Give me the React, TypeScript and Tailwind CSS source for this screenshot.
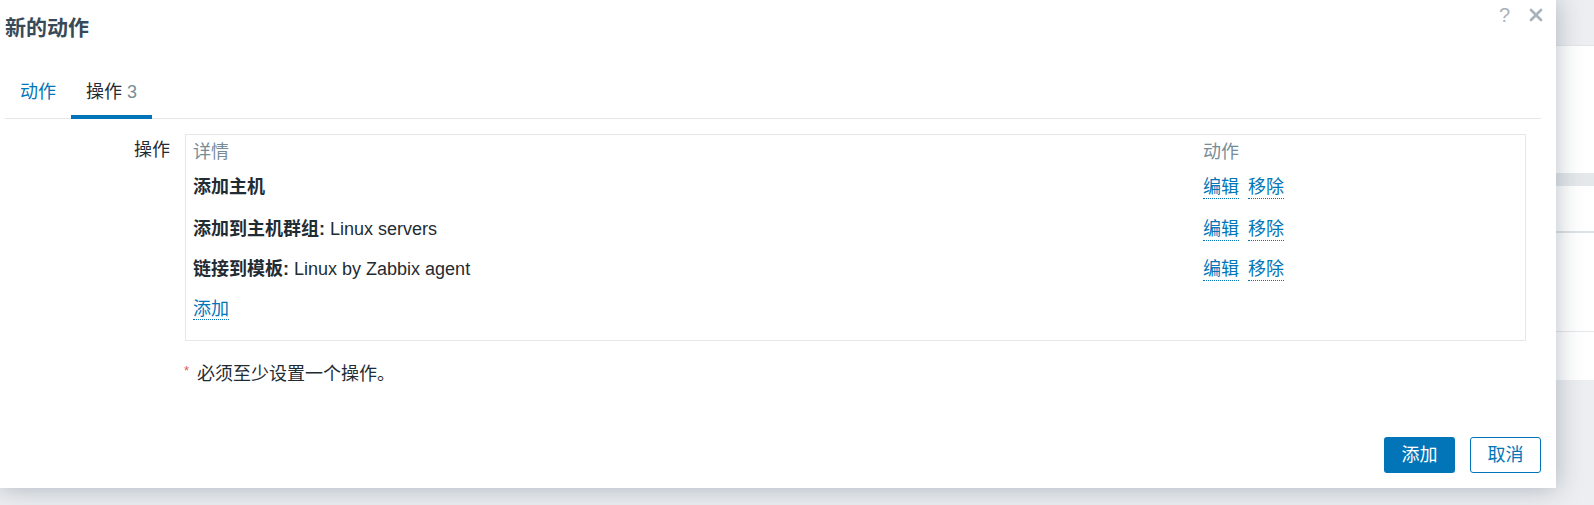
import { X } from 'lucide-react';

const font = { fontFamily: '"Liberation Sans", "Noto Sans CJK SC", sans-serif' };

const ops = [
  { label: '添加主机', value: '' },
  { label: '添加到主机群组:', value: 'Linux servers' },
  { label: '链接到模板:', value: 'Linux by Zabbix agent' },
];

const LinkText: React.FC<{ children: React.ReactNode }> = ({ children }) => (
  <span className="text-[#0275b8] border-b border-dotted border-[#0275b8] cursor-pointer">{children}</span>
);

export default function App() {
  return (
    <div className="relative w-[1594px] h-[505px] overflow-hidden bg-[#e9ecee] text-[18px] leading-[22px] text-[#1f2c33]" style={font}>
      {/* page behind the dialog */}
      <div className="flex flex-col h-full">
        <div className="h-[46px] bg-[#eceef1] border-b border-[#e3e6e9]" />
        <div className="h-[127px] bg-white" />
        <div className="h-[13px] bg-[#e4e8eb]" />
        <div className="h-[45px] bg-white" />
        <div className="h-[2px] bg-[#dde2e6]" />
        <div className="h-[99px] bg-white border-b border-[#e6e9ec]" />
        <div className="h-[48px] bg-white" />
        <div className="flex-1 bg-[#eceef1]" />
      </div>

      {/* dialog */}
      <div className="absolute left-0 top-0 w-[1556px] h-[488px] bg-white shadow-[0_0_24px_rgba(50,70,90,0.35)] flex flex-col pl-[5px] pr-[15px]">
        <div className="absolute right-[10px] top-[5px] flex items-center gap-[16px] text-[#a9b3bc]">
          <span className="text-[20px] leading-[20px]">?</span>
          <X size={20} strokeWidth={3.2} />
        </div>

        <h4 className="pt-[14px] text-[21px] leading-[28px] font-bold text-[#384a58]">新的动作</h4>

        <div className="mt-[39px] flex border-b border-[#e5e8eb]">
          <div className="px-[15px] pb-[11px] border-b-4 border-transparent text-[#0275b8]">动作</div>
          <div className="px-[15px] pb-[11px] border-b-4 border-[#0275b8] -mb-px">
            操作 <span className="text-[#768d99]">3</span>
          </div>
        </div>

        <div className="mt-[15px] flex">
          <div className="w-[165px] text-right pt-[5px]">操作</div>
          <div className="ml-[15px] w-[1341px] border border-[#e5e8eb] pl-[7px] pt-[6px]">
            <div className="grid grid-cols-[1010px_1fr] h-[35px] text-[#768d99]">
              <div>详情</div>
              <div>动作</div>
            </div>
            {ops.map((op, i) => (
              <div key={i} className={`grid grid-cols-[1010px_1fr] items-start ${i === 0 ? 'h-[42px]' : 'h-[40px]'}`}>
                <div>
                  <span className="font-bold">{op.label}</span>
                  {op.value && <span> {op.value}</span>}
                </div>
                <div className="flex items-start gap-[9px]">
                  <LinkText>编辑</LinkText>
                  <LinkText>移除</LinkText>
                </div>
              </div>
            ))}
            <div className="h-[42px]">
              <LinkText>添加</LinkText>
            </div>
          </div>
        </div>

        <div className="mt-[22px] pl-[179px] flex items-start">
          <span className="text-[#e45959] text-[13px] leading-[16px] mr-[8px]">*</span>
          <span>必须至少设置一个操作。</span>
        </div>

        <div className="mt-auto pb-[15px] flex justify-end gap-[15px]">
          <button className="w-[71px] h-[36px] rounded-[3px] bg-[#0275b8] text-white">添加</button>
          <button className="w-[71px] h-[36px] rounded-[3px] border border-[#0275b8] text-[#0275b8] bg-white">取消</button>
        </div>
      </div>
    </div>
  );
}
